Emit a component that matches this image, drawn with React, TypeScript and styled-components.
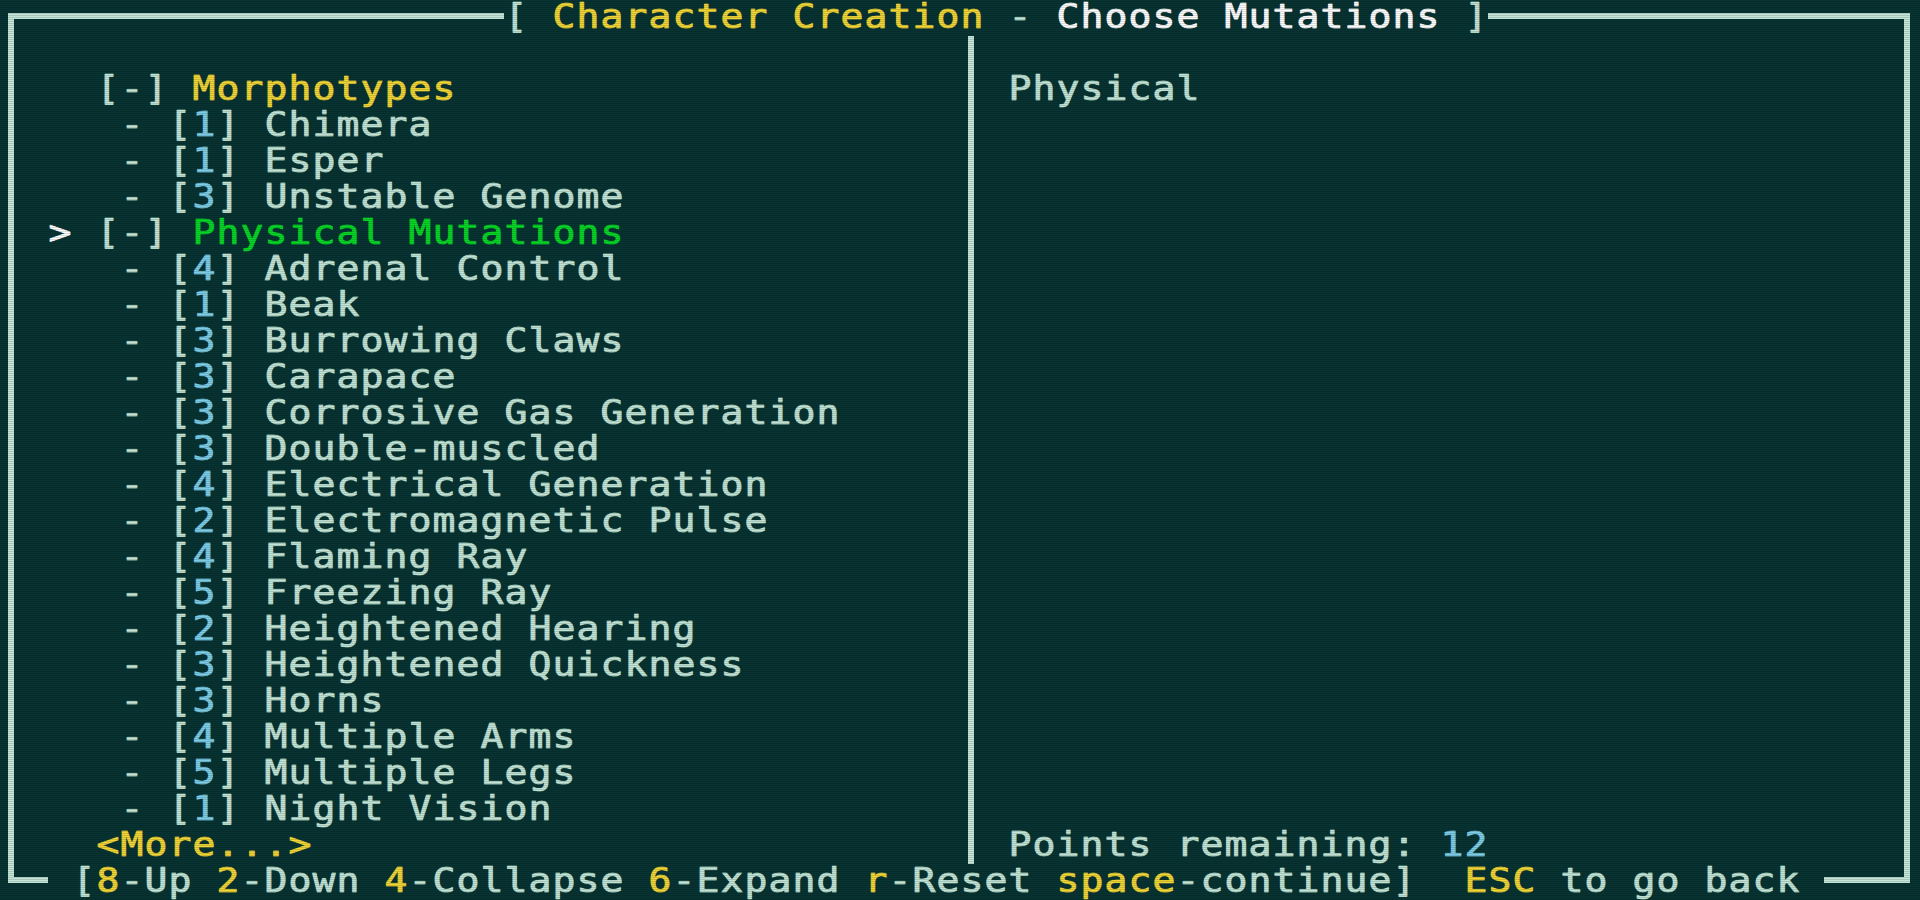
import React from 'react';
import styled, { createGlobalStyle, css } from 'styled-components';

const CELL_W = 24;
const CELL_H = 36;
const COLS = 80;

const colors = {
  bg: '#073432',
  text: '#c2e4d6',
  line: '#c4e6d8',
  yellow: '#f0d636',
  green: '#08d626',
  cyan: '#7ccde6',
  white: '#ffffff',
};

const GlobalStyle = createGlobalStyle`
  html, body {
    margin: 0;
    padding: 0;
    background: ${colors.bg};
  }
  #root {
    width: 1920px;
    height: 900px;
    overflow: hidden;
  }
`;

const Screen = styled.div`
  position: relative;
  width: ${COLS * CELL_W}px;
  height: 900px;
  display: grid;
  grid-template-rows: repeat(25, ${CELL_H}px);
  background: ${colors.bg};
  font-family: 'DejaVu Sans Mono', 'Liberation Mono', monospace;
  font-size: 34px;
  line-height: 32px;

  &::after {
    content: '';
    position: absolute;
    inset: 0;
    pointer-events: none;
    background: repeating-linear-gradient(
      to bottom,
      rgba(0, 0, 0, 0) 0px,
      rgba(0, 0, 0, 0) 1px,
      rgba(0, 0, 0, 0.14) 1px,
      rgba(0, 0, 0, 0.14) 2px
    );
  }
`;

const Row = styled.div`
  display: flex;
  height: ${CELL_H}px;
`;

const Cell = styled.span<{ $color: string }>`
  display: inline-block;
  flex: 0 0 ${CELL_W}px;
  width: ${CELL_W}px;
  height: ${CELL_H}px;
  text-align: center;
  white-space: pre;
  color: ${(p) => p.$color};
  transform: scaleX(1.12);
  -webkit-text-stroke: 0.6px ${(p) => p.$color};
  text-shadow: 0 0 1px ${(p) => p.$color};
`;

type HPart = 'full' | 'left' | 'right' | 'none';
type VPart = 'full' | 'top' | 'bottom' | 'none';

const LINE = 6;
const LINE_X = 8;
const LINE_Y = 13;

const BoxCell = styled.span<{ $h: HPart; $v: VPart }>`
  position: relative;
  display: inline-block;
  flex: 0 0 ${CELL_W}px;
  width: ${CELL_W}px;
  height: ${CELL_H}px;

  &::before {
    content: '';
    position: absolute;
    top: ${LINE_Y}px;
    height: ${LINE}px;
    background: ${colors.line};
    ${(p) =>
      p.$h === 'none'
        ? css`display: none;`
        : p.$h === 'full'
        ? css`left: 0; right: 0;`
        : p.$h === 'left'
        ? css`left: 0; width: ${LINE_X + LINE}px;`
        : css`left: ${LINE_X}px; right: 0;`}
  }

  &::after {
    content: '';
    position: absolute;
    left: ${LINE_X}px;
    width: ${LINE}px;
    background: ${colors.line};
    ${(p) =>
      p.$v === 'none'
        ? css`display: none;`
        : p.$v === 'full'
        ? css`top: 0; bottom: 0;`
        : p.$v === 'top'
        ? css`top: 0; height: ${LINE_Y + LINE}px;`
        : css`top: ${LINE_Y}px; bottom: 0;`}
  }
`;

const boxParts: Record<string, [HPart, VPart]> = {
  '─': ['full', 'none'],
  '│': ['none', 'full'],
  '┌': ['right', 'bottom'],
  '┐': ['left', 'bottom'],
  '└': ['right', 'top'],
  '┘': ['left', 'top'],
};

interface Seg {
  t: string;
  c?: string;
}

const s = (t: string, c: string = colors.text): Seg => ({ t, c });

const pad = (segs: Seg[], width: number): Seg[] => {
  const len = segs.reduce((n, x) => n + x.t.length, 0);
  return len < width ? [...segs, s(' '.repeat(width - len))] : segs;
};

const TermRow: React.FC<{ segs: Seg[] }> = ({ segs }) => {
  const cells: React.ReactNode[] = [];
  segs.forEach((seg, si) => {
    Array.from(seg.t).forEach((ch, ci) => {
      const key = `${si}-${ci}`;
      const box = boxParts[ch];
      if (box) {
        cells.push(<BoxCell key={key} $h={box[0]} $v={box[1]} />);
      } else {
        cells.push(
          <Cell key={key} $color={seg.c || colors.text}>
            {ch}
          </Cell>
        );
      }
    });
  });
  return <Row>{cells}</Row>;
};

interface Entry {
  cost?: number;
  name: string;
  category?: boolean;
  selected?: boolean;
  more?: boolean;
}

const entries: Entry[] = [
  { name: 'Morphotypes', category: true },
  { cost: 1, name: 'Chimera' },
  { cost: 1, name: 'Esper' },
  { cost: 3, name: 'Unstable Genome' },
  { name: 'Physical Mutations', category: true, selected: true },
  { cost: 4, name: 'Adrenal Control' },
  { cost: 1, name: 'Beak' },
  { cost: 3, name: 'Burrowing Claws' },
  { cost: 3, name: 'Carapace' },
  { cost: 3, name: 'Corrosive Gas Generation' },
  { cost: 3, name: 'Double-muscled' },
  { cost: 4, name: 'Electrical Generation' },
  { cost: 2, name: 'Electromagnetic Pulse' },
  { cost: 4, name: 'Flaming Ray' },
  { cost: 5, name: 'Freezing Ray' },
  { cost: 2, name: 'Heightened Hearing' },
  { cost: 3, name: 'Heightened Quickness' },
  { cost: 3, name: 'Horns' },
  { cost: 4, name: 'Multiple Arms' },
  { cost: 5, name: 'Multiple Legs' },
  { cost: 1, name: 'Night Vision' },
  { name: '<More...>', more: true },
];

const leftLine = (e: Entry | undefined): Seg[] => {
  if (!e) return [];
  if (e.more) return [s('   '), s(e.name, colors.yellow)];
  if (e.category) {
    return [
      s(' '),
      s(e.selected ? '>' : ' ', colors.white),
      s(' [-] '),
      s(e.name, e.selected ? colors.green : colors.yellow),
    ];
  }
  return [s('    - ['), s(String(e.cost), colors.cyan), s('] '), s(e.name)];
};

const rightLine = (row: number): Seg[] => {
  if (row === 2) return [s(' Physical')];
  if (row === 23) return [s(' Points remaining: '), s('12', colors.cyan)];
  return [];
};

const App: React.FC = () => {
  const rows: Seg[][] = [];

  rows.push([
    s('┌' + '─'.repeat(20), colors.line),
    s('[ '),
    s('Character Creation', colors.yellow),
    s(' - '),
    s('Choose Mutations', colors.white),
    s(' ]'),
    s('─'.repeat(17) + '┐', colors.line),
  ]);

  for (let r = 1; r <= 23; r++) {
    rows.push([
      s('│', colors.line),
      ...pad(leftLine(entries[r - 2]), 39),
      s('│', colors.line),
      ...pad(rightLine(r), 38),
      s('│', colors.line),
    ]);
  }

  rows.push([
    s('└─ ', colors.line),
    s('['),
    s('8', colors.yellow),
    s('-Up '),
    s('2', colors.yellow),
    s('-Down '),
    s('4', colors.yellow),
    s('-Collapse '),
    s('6', colors.yellow),
    s('-Expand '),
    s('r', colors.yellow),
    s('-Reset '),
    s('space', colors.yellow),
    s('-continue]  '),
    s('ESC', colors.yellow),
    s(' to go back '),
    s('───┘', colors.line),
  ]);

  return (
    <>
      <GlobalStyle />
      <Screen>
        {rows.map((segs, i) => (
          <TermRow key={i} segs={segs} />
        ))}
      </Screen>
    </>
  );
};

export default App;
